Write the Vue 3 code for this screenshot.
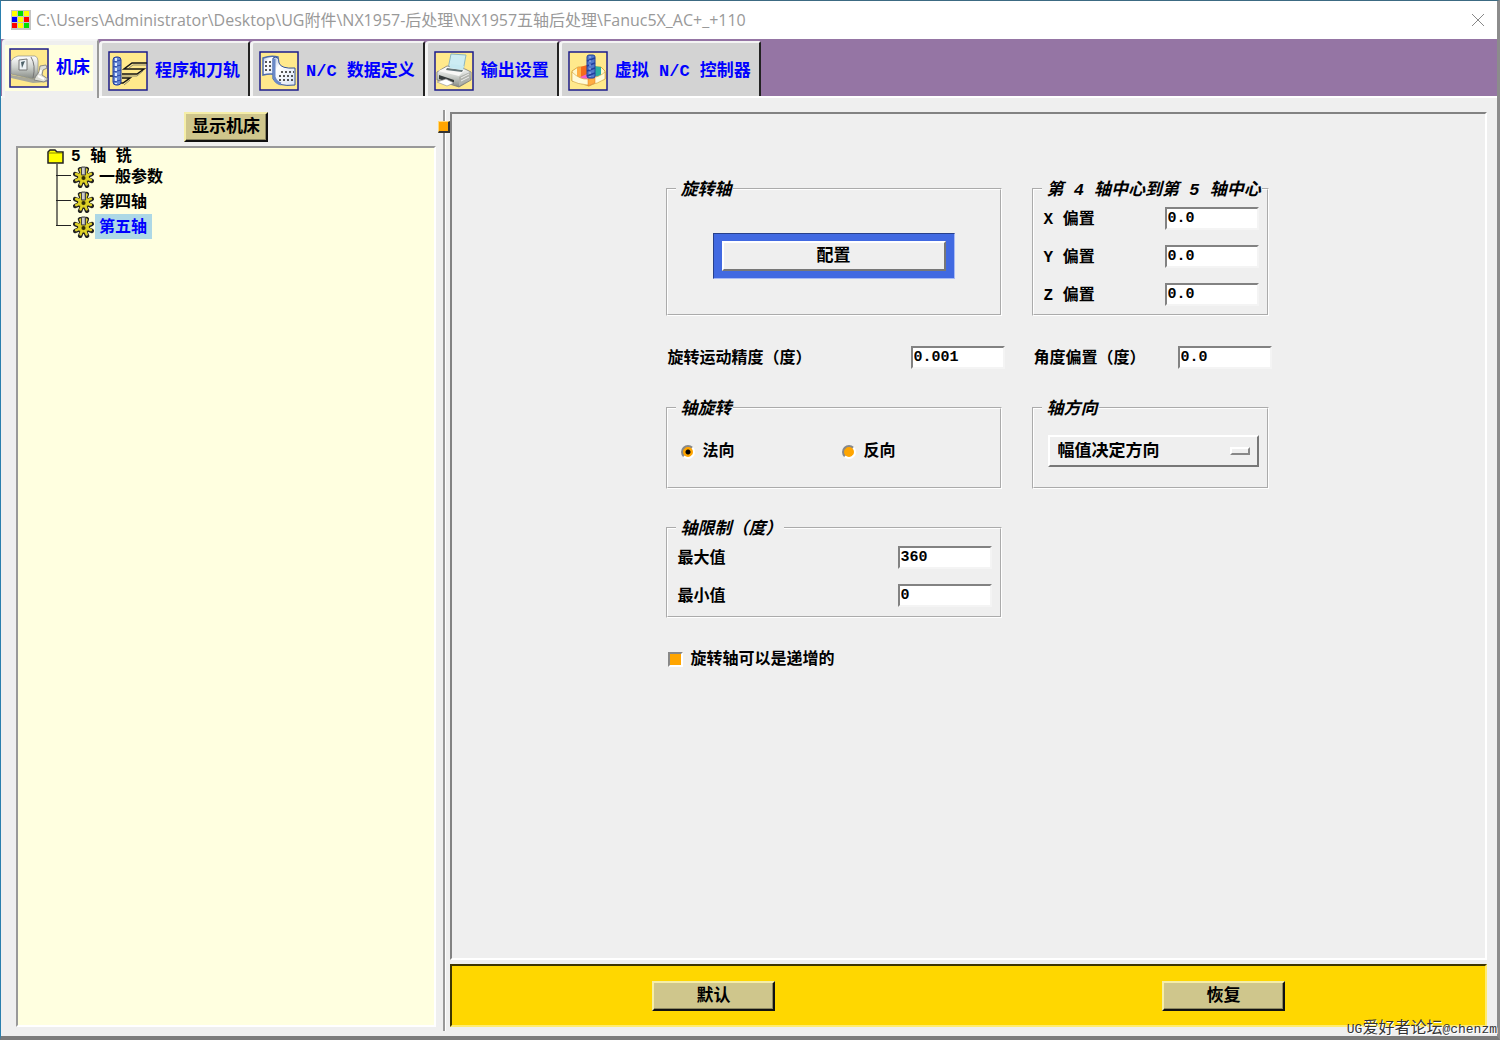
<script setup>
import { ref } from 'vue'

const title = 'C:\\Users\\Administrator\\Desktop\\UG附件\\NX1957-后处理\\NX1957五轴后处理\\Fanuc5X_AC+_+110'
const logo = ['#ff0', '#0d0', '#ff0', '#00f', '#ff0', '#f00', '#f00', '#ff0', '#0d0']
const tabs = [
  { id: 'machine', label: '机床' },
  { id: 'program', label: '程序和刀轨' },
  { id: 'data', label: 'N/C 数据定义' },
  { id: 'output', label: '输出设置' },
  { id: 'virtual', label: '虚拟 N/C 控制器' }
]
const activeTab = ref('machine')
const nodes = ['一般参数', '第四轴', '第五轴']
const selected = ref('第五轴')
const offsets = ref([
  { axis: 'X', value: '0.0' },
  { axis: 'Y', value: '0.0' },
  { axis: 'Z', value: '0.0' }
])
const limits = ref([
  { id: 'max', label: '最大值', value: '360' },
  { id: 'min', label: '最小值', value: '0' }
])
const precision = ref('0.001')
const angle = ref('0.0')
const rotation = ref('normal')
const direction = ref('magnitude')
const incremental = ref(true)
const teeth = [22, 67, 112, 157, 202, 247, 292, 337]
</script>

<template>
  <div class="window">
    <header class="titlebar">
      <svg class="logo" viewBox="0 0 20 20" aria-hidden="true">
        <rect width="20" height="20" fill="#c4c4c4" />
        <rect v-for="(c, i) in logo" :key="i" :x="1 + (i % 3) * 6" :y="1 + Math.floor(i / 3) * 6" width="5" height="5" :fill="c" />
      </svg>
      <h1 class="title">{{ title }}</h1>
      <button class="close" type="button" aria-label="关闭">
        <svg viewBox="0 0 12 12" aria-hidden="true"><path d="M0 0L12 12M12 0L0 12" stroke="#888" fill="none" /></svg>
      </button>
    </header>

    <nav class="tabs">
      <button v-for="t in tabs" :key="t.id" type="button" class="tab" :class="{ active: t.id === activeTab }" @click="activeTab = t.id">
        <span class="face">
          <svg class="tab-icon" viewBox="0 0 40 40" aria-hidden="true">
            <defs>
              <linearGradient id="steel" x1="0" y1="0" x2="0" y2="1">
                <stop offset="0" stop-color="#fff" /><stop offset=".5" stop-color="#ccd0cc" /><stop offset="1" stop-color="#858983" />
              </linearGradient>
              <linearGradient id="sheet" x1="0" y1="0" x2="1" y2="1">
                <stop offset="0" stop-color="#a9bce2" /><stop offset=".3" stop-color="#fff" /><stop offset="1" stop-color="#dbe5f6" />
              </linearGradient>
            </defs>
            <rect x="1" y="1" width="38" height="38" fill="#ffe98c" stroke="#1c1c8c" stroke-width="1.5" />
            <g v-if="t.id === 'machine'">
              <path d="M2 27L24 31L38 32V34L24 35L2 30Z" fill="#a8a89c" />
              <path d="M2 13Q4 9 9 8L26 8Q29 9 29 13V28L24 31L2 26Z" fill="url(#steel)" stroke="#8b8e86" stroke-width=".7" />
              <path d="M22 9Q27 17 24 30" fill="none" stroke="#777" />
              <path d="M10 12L18 11V22L10 22Z" fill="#eef3f6" stroke="#777" />
              <path d="M12 14L16 13L13 20Z" fill="#4e6269" />
              <path d="M30 24L31 18L37 17L38 20L34 22L33 27L39 31L35 34L25 32L27 28Z" fill="#dedfd7" stroke="#777" stroke-width=".8" />
              <path d="M29 28L35 31M32 22L31 26" stroke="#fff" stroke-width="2" />
            </g>
            <g v-else-if="t.id === 'program'">
              <path d="M39 12H24L16 18H36L29 23H14M2 25H12M14 27H22L15 32H10" fill="none" stroke="#151515" stroke-width="1.5" />
              <path d="M38 14H25L21 17M35 20L29 25H14M22 29L16 34" stroke="#8e8a70" fill="none" />
              <rect x="5" y="6" width="8" height="28" rx="3" fill="#6687d2" stroke="#203a9b" />
              <path d="M5 11L13 9M5 16L13 14M5 21L13 19M5 26L13 24M5 31L13 29" stroke="#2c48a8" />
              <path d="M8 7V33" stroke="#dce8ff" stroke-width="2" stroke-dasharray="3 2" />
            </g>
            <g v-else-if="t.id === 'data'">
              <path d="M4 7Q12 4 19 6V24Q12 22 4 24Z" fill="url(#sheet)" stroke="#4e6cac" stroke-width="1.5" />
              <path d="M14 7Q20 4 20 12Q22 18 36 17V34Q18 36 14 28Z" fill="url(#sheet)" stroke="#355497" />
              <path d="M15 8V26Q17 32 22 33" fill="none" stroke="#6b89c7" stroke-width="3" />
              <g stroke="#222" stroke-width="1.5" stroke-dasharray="2 2"><path d="M6 11H13M6 15H13M6 19H13M22 21H35M20 25H35M20 29H35" /></g>
            </g>
            <g v-else-if="t.id === 'output'">
              <path d="M14 18L17 3L32 4L29 20Z" fill="#ccecf3" stroke="#8ab6c0" />
              <path d="M3 21L13 15L31 18L37 21V29L25 36L3 29Z" fill="url(#steel)" stroke="#777" stroke-width=".8" />
              <path d="M4 20L14 16L31 19L25 25Z" fill="#f8f8f6" />
              <path d="M13 17L29 19L28 21L12 19Z" fill="#667679" />
              <path d="M17 13L30 15L29 19L15 17Z" fill="#c6e9f1" />
              <path d="M5 24L20 29V33L5 28Z" fill="#343a3b" />
              <path d="M3 31L12 28L20 32L13 35Z" fill="#fff" stroke="#999" stroke-width=".7" />
              <path d="M25 26V35L36 28V21Z" fill="#b0b2ac" />
              <path d="M27 27L35 23M27 30L35 26" stroke="#eee" />
            </g>
            <g v-else>
              <path d="M4 20L10 16L33 16L37 20V28L21 35L4 30Z" fill="#fff7c9" stroke="#d9ac45" />
              <path d="M9 17L19 14V27L9 29Z" fill="#f56b1c" />
              <path d="M9 17L13 16V28L9 29Z" fill="#ffae42" />
              <path d="M26 15L33 16V26L26 27Z" fill="#2caea1" />
              <path d="M10 27L19 23L30 26L21 30Z" fill="#f25fc9" />
              <path d="M4 21Q12 29 20 28Q32 26 37 21V28Q30 33 20 34Q9 33 4 30Z" fill="#fffbd8" stroke="#d9ac45" stroke-width=".7" />
              <path d="M20 28L27 27V32L20 35Z" fill="#ffad42" stroke="#d97824" stroke-width=".5" />
              <rect x="19" y="4" width="8" height="23" rx="2" fill="#5279cd" stroke="#23409c" />
              <path d="M19 10L27 7M19 15L27 12M19 20L27 17M19 25L27 22" stroke="#233f9d" stroke-width="1.5" />
              <path d="M22 5V26" stroke="#a9c0f0" stroke-dasharray="2 2" />
            </g>
          </svg>
          <span class="tab-text">{{ t.label }}</span>
        </span>
      </button>
    </nav>

    <main class="workspace">
      <aside class="side">
        <button class="khaki show-machine" type="button">显示机床</button>
        <div class="tree">
          <div class="root">
            <svg class="folder" viewBox="0 0 17 15" aria-hidden="true">
              <path d="M1 14V3L3 1H8L10 3H16V14Z" fill="#ff0" stroke="#222" stroke-width="1.5" />
              <path d="M2 4H15" stroke="#8a8a00" />
            </svg>
            <span class="root-text">5 轴 铣</span>
          </div>
          <ul class="nodes">
            <li v-for="(n, i) in nodes" :key="n" class="node">
              <svg class="branch" viewBox="0 0 16 25" aria-hidden="true">
                <path :d="i === nodes.length - 1 ? 'M1 0V11M0 11.5H15' : 'M1 0V25M0 11.5H15'" stroke="#222" stroke-width="1.2" fill="none" />
              </svg>
              <svg class="gear" viewBox="0 0 23 22" aria-hidden="true">
                <g stroke="#222" stroke-width="4.500" stroke-linecap="round">
                  <path v-for="a in teeth" :key="a" d="M11.5 8V2.500" :transform="`rotate(${a} 11.5 11.5)`" />
                </g>
                <circle cx="11.5" cy="11.5" r="6.5" fill="#222" />
                <circle cx="11.5" cy="11" r="5.5" fill="#d2c51c" />
                <g stroke="#e0d32a" stroke-width="2.500" stroke-linecap="round">
                  <path v-for="a in teeth" :key="a" d="M11.5 7V3" :transform="`rotate(${a} 11.5 11)`" />
                </g>
                <circle cx="11.5" cy="12" r="2" fill="#332f08" />
                <path d="M9.500 1H13.500V9H9.500Z" fill="#aaa" stroke="#444" />
                <path d="M11 2V8" stroke="#eee" />
              </svg>
              <button type="button" class="node-label" :class="{ chosen: n === selected }" @click="selected = n">{{ n }}</button>
            </li>
          </ul>
        </div>
      </aside>

      <div class="sash"><span class="grip"></span></div>

      <section class="content">
        <form class="panel" @submit.prevent>
          <div class="form">
            <fieldset class="group tall">
              <legend>旋转轴</legend>
              <div class="config-frame"><button class="config" type="button">配置</button></div>
            </fieldset>

            <fieldset class="group tall">
              <legend>第 4 轴中心到第 5 轴中心</legend>
              <div class="rows">
                <label v-for="o in offsets" :key="o.axis" class="field"><span class="field-text">{{ o.axis }} 偏置</span><input v-model="o.value" class="entry" type="text"></label>
              </div>
            </fieldset>

            <label class="field loose"><span class="field-text">旋转运动精度（度）</span><input v-model="precision" class="entry" type="text"></label>
            <label class="field loose"><span class="field-text">角度偏置（度）</span><input v-model="angle" class="entry" type="text"></label>

            <fieldset class="group short">
              <legend>轴旋转</legend>
              <div class="radios">
                <label class="radio"><input v-model="rotation" type="radio" name="rotation" value="normal">法向</label>
                <label class="radio"><input v-model="rotation" type="radio" name="rotation" value="reverse">反向</label>
              </div>
            </fieldset>

            <fieldset class="group short">
              <legend>轴方向</legend>
              <div class="menu">
                <select v-model="direction" aria-label="轴方向">
                  <option value="magnitude">幅值决定方向</option>
                </select>
                <span class="menu-mark"></span>
              </div>
            </fieldset>

            <fieldset class="group limits">
              <legend>轴限制（度）</legend>
              <div class="rows">
                <label v-for="l in limits" :key="l.id" class="field"><span class="field-text">{{ l.label }}</span><input v-model="l.value" class="entry" type="text"></label>
              </div>
            </fieldset>

            <label class="check"><input v-model="incremental" type="checkbox"><span class="field-text">旋转轴可以是递增的</span></label>
          </div>
        </form>

        <footer class="actions">
          <button class="khaki wide" type="button">默认</button>
          <button class="khaki wide" type="button">恢复</button>
        </footer>
      </section>
    </main>
    <p class="credit"><span class="latin">UG</span>爱好者论坛<span class="latin">@chenzm</span></p>
  </div>
</template>

<style>
body {
  margin: 0;
  background: #efefef;
}
</style>

<style scoped>
* {
  box-sizing: border-box;
}
.window {
  position: relative;
  display: flex;
  flex-direction: column;
  min-height: 100vh;
  background: #efefef;
  border: solid;
  border-width: 1px 3px 4px 1px;
  border-color: #3c6a82 #8c8c8c #7b7b7b #2a7fae;
  color: #000;
  font: bold 16px/20px "Liberation Mono", "Noto Sans CJK SC", monospace;
}
button,
input,
select {
  margin: 0;
  font: inherit;
  color: inherit;
}
.titlebar {
  display: flex;
  align-items: center;
  height: 38px;
  padding: 0 13px 0 10px;
  background: #fff;
}
.logo {
  width: 20px;
  height: 20px;
}
.title {
  flex: 1;
  margin: 0 0 0 5px;
  color: #999;
  font: 16px/20px "Open Sans", "Noto Sans CJK SC", sans-serif;
  white-space: nowrap;
}
.close {
  width: 12px;
  height: 12px;
  padding: 0;
  border: 0;
  background: none;
}
.close svg {
  display: block;
}
.tabs {
  display: flex;
  height: 59px;
  padding: 2px 0 0 1px;
  background: #9575a4;
  border-bottom: 2px solid #fff;
}
.tab {
  padding: 0;
  background: #d3d3d3;
  border: solid;
  border-width: 2px 2px 0 3px;
  border-color: #f4f4f4 #222 #222 #f4f4f4;
  border-radius: 4px 2px 0 0;
  color: #00f;
  font-size: 17px;
  white-space: nowrap;
}
.tab.active {
  z-index: 1;
  margin: -2px 0 -2px;
  background: #efefef;
  border-right-color: #999;
}
.face {
  display: flex;
  align-items: center;
  gap: 7px;
  height: 46px;
  padding: 2px 8px 0 6px;
}
.active .face {
  margin: 0 4px 4px 0;
  padding: 0 3px 0 4px;
  background: #ffffe0;
}
.tab-text {
  padding-top: 3px;
}
.tab-icon {
  width: 40px;
  height: 40px;
}
.workspace {
  flex: 1;
  display: flex;
  padding: 12px 10px 5px 15px;
}
.side {
  display: flex;
  flex: 0 0 420px;
  flex-direction: column;
  padding-top: 2px;
}
.khaki {
  height: 30px;
  padding: 2px 6px 0;
  background: #cfc68c;
  border: 2px solid;
  border-color: #f5eea8 #111 #111 #f5eea8;
  box-shadow: inset -1px -1px 0 #8d8860;
  font-size: 17px;
}
.show-machine {
  align-self: center;
}
.tree {
  flex: 1;
  margin: 4px 0 4px;
  padding: 0 0 0 29px;
  background: #ffffe0;
  border: 2px solid;
  border-color: #999 #fff #fff #999;
}
.root {
  display: flex;
  align-items: center;
  gap: 7px;
  height: 16px;
}
.root-text {
  padding-top: 2px;
}
.folder {
  width: 17px;
  height: 15px;
}
.nodes {
  margin: 0;
  padding: 0 0 0 9px;
  list-style: none;
}
.node {
  display: flex;
  align-items: center;
  height: 25px;
}
.branch {
  width: 16px;
  height: 25px;
}
.gear {
  width: 23px;
  height: 22px;
}
.node-label {
  height: 25px;
  padding: 2px 5px 0 4px;
  border: 0;
  background: none;
}
.node-label.chosen {
  background: #add8e6;
  color: #00f;
}
.sash {
  position: relative;
  width: 3px;
  margin: 0 4px 0 7px;
  border-left: 2px solid #999;
  border-right: 1px solid #fff;
}
.grip {
  position: absolute;
  top: 11px;
  left: -7px;
  width: 12px;
  height: 12px;
  background: #ffa500;
  border: solid;
  border-width: 1px 2px 2px 1px;
  border-color: #ffd97a #333 #333 #ffd97a;
}
.content {
  flex: 1;
  display: flex;
  flex-direction: column;
  gap: 4px;
  margin: 2px 0 4px;
}
.panel {
  flex: 1;
  display: flex;
  justify-content: center;
  align-items: flex-start;
  padding: 66px 0 30px;
  border: 2px solid;
  border-color: #828282 #fff #fff #828282;
}
.form {
  display: grid;
  grid-template-columns: 339px 240px;
  gap: 30px 27px;
}
.group {
  min-width: 0;
  margin: 0 3px 0 0;
  padding: 0 8px;
  border: 2px groove #fff;
}
.group legend {
  height: 18px;
  padding: 0 1px 0 5px;
  font: italic bold 17px/22px "Liberation Mono", "Noto Sans CJK SC", monospace;
  white-space: nowrap;
}
.tall {
  height: 136px;
}
.short {
  height: 90px;
}
.limits {
  grid-column: 1 / -1;
  width: 336px;
  height: 99px;
}
.config-frame {
  width: 242px;
  margin: 35px auto 0;
  padding: 7px 8px;
  background: #4169e1;
  border: 1px solid;
  border-color: #27408b #a9bbf5 #a9bbf5 #27408b;
}
.config {
  display: block;
  width: 100%;
  height: 30px;
  padding: 2px 0 0;
  background: #efefef;
  border: 2px solid;
  border-color: #fff #777 #777 #fff;
  font-size: 17px;
}
.rows {
  display: flex;
  flex-direction: column;
  gap: 15px;
  padding: 9px 0 0 2px;
}
.field {
  display: flex;
  align-items: center;
  justify-content: space-between;
  height: 23px;
}
.field.loose {
  padding-left: 2px;
}
.field-text {
  padding-top: 2px;
}
.entry {
  width: 94px;
  height: 23px;
  padding: 0 1px;
  background: #fff;
  border: 2px solid;
  border-color: #828282 #f4f4f4 #f4f4f4 #828282;
  border-radius: 0;
  font-size: 15px;
}
.radios {
  display: grid;
  grid-template-columns: 161px 1fr;
  padding: 25px 0 0 5px;
}
.radio,
.check {
  display: flex;
  align-items: center;
  gap: 8px;
}
.radio input {
  appearance: none;
  width: 14px;
  height: 14px;
  background: #ffa500;
  border: 2px solid;
  border-color: #888 #fff #fff #888;
  border-radius: 50%;
}
.radio input:checked {
  background: radial-gradient(circle, #000 2px, #ffa500 3px);
}
.menu {
  position: relative;
  margin: 18px 0 0 6px;
}
.menu select {
  display: block;
  width: 100%;
  height: 32px;
  padding: 2px 8px 0;
  appearance: none;
  background: #efefef;
  border: 2px solid;
  border-color: #fff #777 #777 #fff;
  border-radius: 0;
  font-size: 17px;
}
.menu-mark {
  position: absolute;
  top: 12px;
  right: 9px;
  width: 20px;
  height: 8px;
  border: 2px solid;
  border-color: #fff #888 #888 #fff;
  pointer-events: none;
}
.check {
  grid-column: 1 / -1;
  padding-left: 2px;
}
.check input {
  appearance: none;
  width: 15px;
  height: 15px;
  background: #ffa500;
  border: 2px solid;
  border-color: #888 #fff #fff #888;
}
.actions {
  display: flex;
  justify-content: center;
  align-items: center;
  gap: 387px;
  height: 63px;
  background: #ffd700;
  border: 2px solid;
  border-color: #3e3500 #ffec70 #ffec70 #3e3500;
}
.wide {
  width: 123px;
}
.credit {
  position: absolute;
  right: 0;
  bottom: -4px;
  margin: 0;
  color: #333;
  font-weight: normal;
  text-shadow: 1px 1px 0 #fff;
}
.latin {
  font-size: 13px;
}
</style>
